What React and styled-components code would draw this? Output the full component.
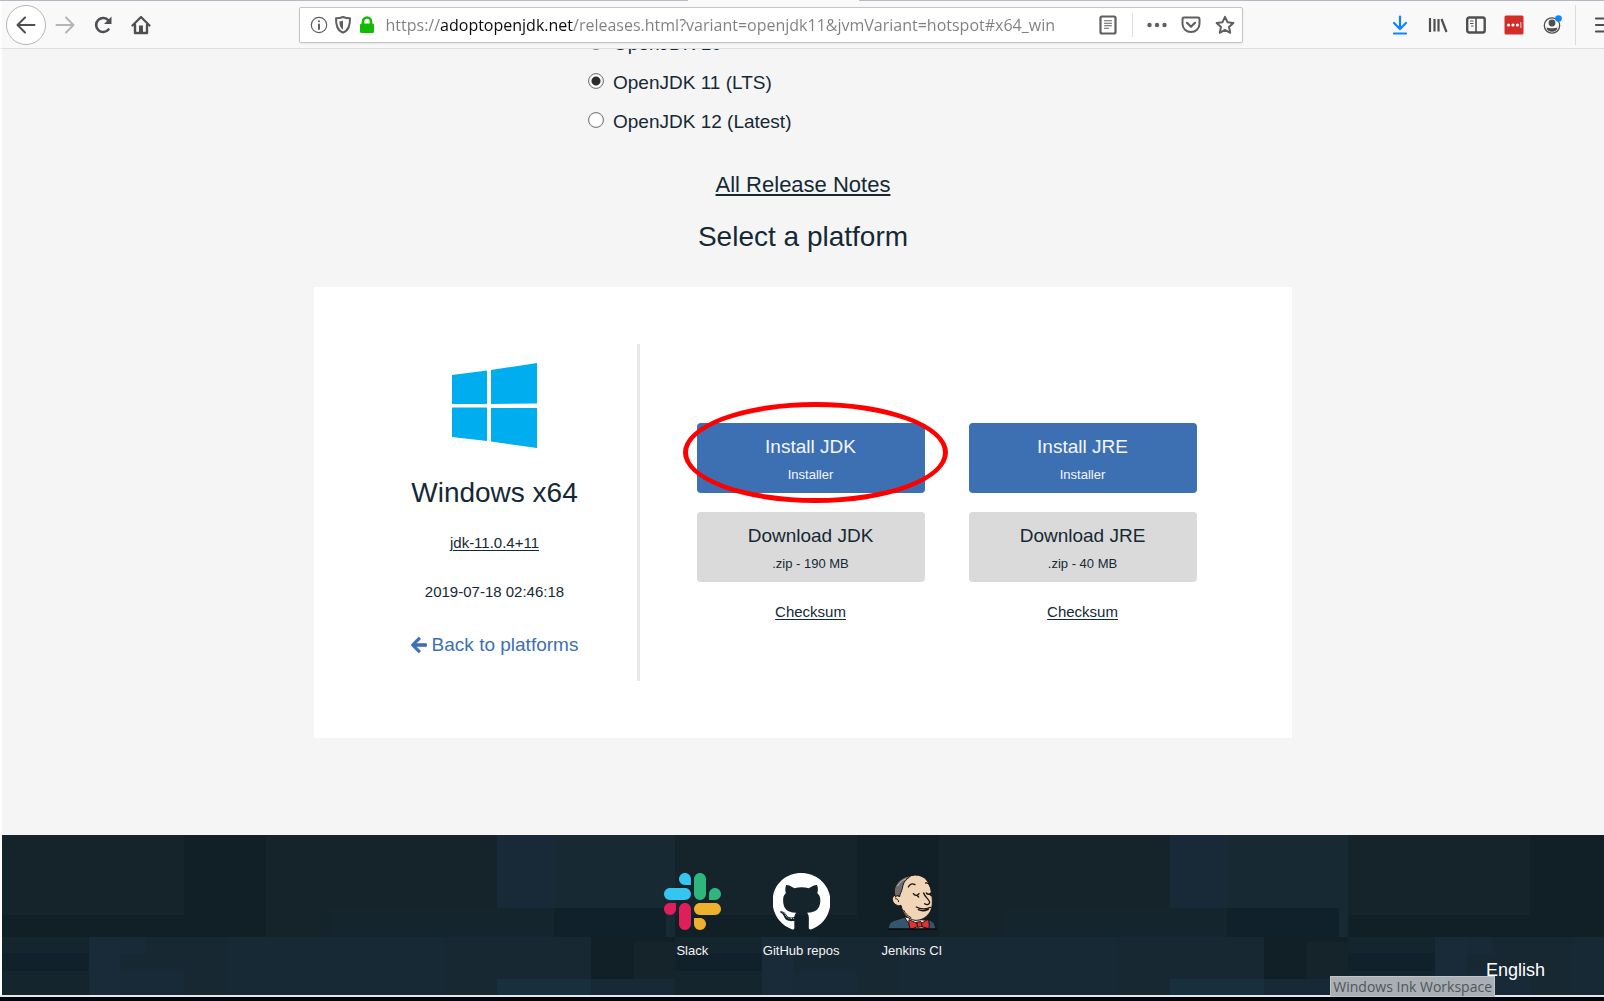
import React from "react";
import styled, { createGlobalStyle } from "styled-components";
import { FaGithub } from "react-icons/fa";

const sans = `"Liberation Sans", Arial, sans-serif`;
const chrome = `"Open Sans", "Noto Sans", sans-serif`;

const GlobalStyle = createGlobalStyle`
  *, *::before, *::after { box-sizing: border-box; }
  body { margin: 0; background: #03050e; }
  a { color: inherit; }
`;

/* ---------- window ---------- */

const Window = styled.div`
  display: flex;
  flex-direction: column;
  min-height: 100vh;
  overflow: hidden;
  color: #152935;
  font-family: ${sans};
`;

const TabEdge = styled.div`
  display: flex;
  height: 1px;
  background: #b9b7c1;
  justify-content: center;
`;

const ActiveTab = styled.div`
  width: 171px;
  margin-right: 57px;
  background: #f9f9fa;
`;

const Toolbar = styled.header`
  display: flex;
  align-items: center;
  justify-content: space-between;
  height: 48px;
  padding-left: 4px;
  border-left: 2px solid #fff;
  border-bottom: 1px solid #dfdfe0;
  background: #f9f9fa;
  overflow: hidden;
`;

const Group = styled.div`
  display: flex;
  align-items: center;
  gap: ${(p) => p.$gap}px;
`;

const IconButton = styled.button`
  display: flex;
  flex: none;
  align-items: center;
  justify-content: center;
  width: 20px;
  height: 20px;
  padding: 0;
  border: 0;
  background: none;
  color: ${(p) => p.$color || "#4f4f51"};
`;

const BackButton = styled(IconButton)`
  width: 40px;
  height: 40px;
  border: 1px solid #b5b5b5;
  border-radius: 50%;
  background: #fff;
`;

const Glyph = styled.svg`
  display: block;
  width: 20px;
  height: 20px;
  fill: none;
  stroke: currentColor;
  stroke-width: 2;
  stroke-linecap: round;
  stroke-linejoin: round;
`;

const AddressBar = styled.div`
  display: flex;
  align-items: center;
  flex: 0 1 944px;
  gap: 4px;
  height: 36px;
  padding: 0 7px 0 9px;
  border: 1px solid #c5c5c6;
  border-radius: 2px;
  background: #fff;
  box-shadow: 0 1px 2px rgba(0, 0, 0, 0.08);
`;

const AddressInput = styled.input`
  flex: 1;
  min-width: 0;
  height: 28px;
  margin-left: 5px;
  padding: 0;
  border: 0;
  outline: 0;
  font: 16px/28px ${chrome};
  color: transparent;
  background: linear-gradient(
    to right,
    #7f7f7f 54px,
    #0c0c0d 54px,
    #0c0c0d 187px,
    #7f7f7f 187px
  );
  -webkit-background-clip: text;
  background-clip: text;
`;

const Rule = styled.span`
  width: 1px;
  height: ${(p) => p.$height}px;
  background: #dcdcdd;
`;

const ToolbarEnd = styled(Group)`
  margin-right: -10px;
`;

/* ---------- page ---------- */

const Page = styled.main`
  flex: 1;
  display: flex;
  flex-direction: column;
  align-items: center;
  border-left: 2px solid #fff;
  background: #f5f5f5;
  overflow: hidden;
  padding-bottom: 97px;
`;

const VersionList = styled.fieldset`
  width: 430px;
  margin: -25px 0 0;
  padding: 0;
  border: 0;
`;

const VersionRow = styled.label`
  display: flex;
  align-items: center;
  gap: 9px;
  height: 39px;
  font-size: 19px;
  line-height: 22px;
`;

const Radio = styled.input`
  appearance: none;
  width: 16px;
  height: 16px;
  margin: 0 0 3px;
  border: 1px solid #7c7c7c;
  border-radius: 50%;
  background: #fff;
  box-shadow: inset 0 0 1px #777;

  &:checked {
    background: radial-gradient(circle, #2b2b2b 4px, #fff 5px);
  }
`;

const ReleaseNotes = styled.a`
  margin-top: 31px;
  font-size: 22px;
  line-height: 26px;
  text-underline-offset: 2px;
`;

const Title = styled.h2`
  margin: 23px 0 0;
  font-size: 28px;
  line-height: 32px;
  font-weight: 400;
`;

const Card = styled.section`
  display: flex;
  width: 978px;
  max-width: 100%;
  margin-top: 34px;
  padding: 57px 35px;
  background: #fff;
`;

const Platform = styled.div`
  display: flex;
  flex: 0 0 291px;
  flex-direction: column;
  align-items: center;
  padding: 19px 0 25px 3px;
  border-right: 3px solid #e6e8ea;
`;

const PlatformLogo = styled.svg`
  width: 85px;
  height: 85px;
  fill: #00adef;
`;

const PlatformName = styled.h3`
  margin: 29px 0 25px;
  font-size: 28px;
  line-height: 32px;
  font-weight: 400;
`;

const SmallLink = styled.a`
  font-size: 15px;
  line-height: 18px;
  text-underline-offset: 2px;
`;

const Released = styled.time`
  margin: 31px 0 33px;
  font-size: 15px;
  line-height: 18px;
`;

const BackLink = styled.a`
  display: flex;
  align-items: center;
  gap: 5px;
  color: #3d70b2;
  font-size: 19px;
  line-height: 22px;
  text-decoration: none;
`;

const BackArrow = styled.svg`
  width: 16px;
  height: 18px;
  fill: currentColor;
`;

const Downloads = styled.div`
  display: flex;
  flex: 1;
  justify-content: center;
  gap: 44px;
  padding: 79px 4px 0 0;
`;

const DownloadColumn = styled.div`
  position: relative;
  display: flex;
  flex-direction: column;
  align-items: center;
  width: 228px;
`;

const DownloadButton = styled.button`
  display: flex;
  flex-direction: column;
  align-items: center;
  gap: 9px;
  width: 100%;
  margin-bottom: 19px;
  padding: 13px 8px 10px;
  border: 0;
  border-radius: 4px;
  background: ${(p) => (p.$primary ? "#3d70b2" : "#dadada")};
  color: ${(p) => (p.$primary ? "#f4f6fa" : "#152935")};
  font-family: inherit;
`;

const ButtonTitle = styled.span`
  font-size: 19px;
  line-height: 22px;
`;

const ButtonNote = styled.span`
  font-size: 13px;
  line-height: 16px;
`;

const ChecksumLink = styled(SmallLink)`
  margin-top: 2px;
`;

const Highlight = styled.span`
  position: absolute;
  top: -21px;
  left: -14px;
  width: 265px;
  height: 101px;
  border: 5px solid #fe0000;
  border-radius: 50%;
  pointer-events: none;
`;

/* ---------- footer ---------- */

const Footer = styled.footer`
  position: relative;
  padding: 38px 59px 15px;
  border-left: 2px solid #fff;
  background: #15232b;
  color: #f4f4f4;
`;

const Mosaic = styled.svg`
  position: absolute;
  inset: 0;
  width: 100%;
  height: 100%;
`;

const Community = styled.nav`
  position: relative;
  display: flex;
  justify-content: center;
  gap: 42px;
`;

const CommunityLink = styled.a`
  display: flex;
  flex-direction: column;
  align-items: center;
  gap: 13px;
  font-size: 13px;
  line-height: 16px;
  text-decoration: none;

  svg {
    width: 57px;
    height: 57px;
  }
`;

const Language = styled.div`
  position: relative;
  display: flex;
  justify-content: flex-end;
  margin-top: 1px;
  font-size: 18px;
  line-height: 20px;
  color: #fff;
`;

const Taskbar = styled.div`
  position: relative;
  height: 6px;
  border-top: 2px solid #e4e7e8;
  background: #03050e;
`;

const Tooltip = styled.div`
  position: absolute;
  right: 109px;
  bottom: 4px;
  padding: 0 2px;
  border: 1px solid #c0c4c8;
  background: #a9afb4;
  color: #505559;
  font: 14px/19px ${chrome};
  white-space: nowrap;
`;

/* [x, y, width, height, colour] of each block in one 673px tile */
const blocks = [
  [0, 0, 182, 80, "#15232b"],
  [0, 80, 182, 22, "#111f26"],
  [182, 0, 82, 102, "#111f27"],
  [264, 0, 231, 102, "#15232b"],
  [328, 73, 224, 29, "#14252e"],
  [495, 0, 57, 73, "#182937"],
  [552, 0, 121, 102, "#172933"],
  [552, 73, 112, 29, "#11212b"],
  [0, 102, 87, 58, "#14252e"],
  [0, 118, 87, 18, "#11212b"],
  [87, 102, 31, 58, "#192b38"],
  [118, 102, 107, 58, "#172833"],
  [118, 102, 26, 17, "#182937"],
  [118, 136, 64, 24, "#182937"],
  [225, 102, 216, 58, "#182936"],
  [441, 102, 148, 58, "#172833"],
  [589, 102, 84, 58, "#111f27"],
  [632, 107, 41, 53, "#15232b"],
  [495, 144, 94, 16, "#182f3e"],
  [589, 144, 84, 16, "#172935"],
];

function FooterMosaic() {
  return (
    <Mosaic aria-hidden="true" shapeRendering="crispEdges">
      <defs>
        <pattern id="mosaic" width="673" height="160" patternUnits="userSpaceOnUse">
          {blocks.map(([x, y, w, h, fill], i) => (
            <rect key={i} x={x} y={y} width={w} height={h} fill={fill} />
          ))}
        </pattern>
      </defs>
      <rect width="100%" height="100%" fill="url(#mosaic)" />
    </Mosaic>
  );
}

function SlackLogo() {
  return (
    <svg viewBox="0 0 122.8 122.8" aria-hidden="true">
      <path fill="#e01e5a" d="M25.8 77.6c0 7.1-5.8 12.9-12.9 12.9S0 84.7 0 77.6s5.8-12.9 12.9-12.9h12.9v12.9zm6.5 0c0-7.1 5.8-12.9 12.9-12.9s12.9 5.8 12.9 12.9v32.3c0 7.1-5.8 12.9-12.9 12.9s-12.9-5.8-12.9-12.9V77.6z" />
      <path fill="#36c5f0" d="M45.2 25.8c-7.1 0-12.9-5.8-12.9-12.9S38.1 0 45.2 0s12.9 5.8 12.9 12.9v12.9H45.2zm0 6.5c7.1 0 12.9 5.8 12.9 12.9s-5.8 12.9-12.9 12.9H12.9C5.8 58.1 0 52.3 0 45.2s5.8-12.9 12.9-12.9h32.3z" />
      <path fill="#2eb67d" d="M97 45.2c0-7.1 5.8-12.9 12.9-12.9s12.9 5.8 12.9 12.9-5.8 12.9-12.9 12.9H97V45.2zm-6.5 0c0 7.1-5.8 12.9-12.9 12.9s-12.9-5.8-12.9-12.9V12.9C64.7 5.8 70.5 0 77.6 0s12.9 5.8 12.9 12.9v32.3z" />
      <path fill="#ecb22e" d="M77.6 97c7.1 0 12.9 5.8 12.9 12.9s-5.8 12.9-12.9 12.9-12.9-5.8-12.9-12.9V97h12.9zm0-6.5c-7.1 0-12.9-5.8-12.9-12.9s5.8-12.9 12.9-12.9h32.3c7.1 0 12.9 5.8 12.9 12.9s-5.8 12.9-12.9 12.9H77.6z" />
    </svg>
  );
}

function JenkinsLogo() {
  return (
    <svg viewBox="12 24 171 171" aria-hidden="true">
      <g stroke="#1a1310" strokeWidth="3" strokeLinejoin="round" strokeLinecap="round">
        <path fill="#33566e" d="M27 192c2-16 8-23 20-26l28-9 70 6c14 4 23 9 26 29z" />
        <path fill="#f4f4f4" d="M76 156l24 36h34l14-26-30-2z" />
        <path fill="#f0d6b7" d="M60 92C62 60 74 32 108 30c32 0 46 24 49 52 4 22 5 38-2 56-9 17-26 29-47 28-22-4-36-18-42-45-8 4-24-3-26-17 0-12 10-17 18-11z" />
        <path fill="#6d6d70" d="M50 95c-7-11-5-27 3-38 9-14 24-23 42-25l-10 10c-9 5-13 16-15 28-2 11-7 14-8 25-4-4-8-4-12 0z" />
        <path fill="none" stroke="#b9b9bb" strokeWidth="3" d="M56 62c6-10 14-16 24-20" />
        <path fill="none" d="M50 101c5 0 8 3 9 9" />
        <path fill="none" strokeWidth="4" d="M88 66c4-9 12-12 20-7M140 54c6-2 11 2 13 9" />
        <path fill="none" strokeWidth="4" d="M103 86c4 6 13 7 17 0M115 92l4 4M142 84c4 5 10 5 14 0M154 89l3 3" />
        <path fill="none" strokeWidth="4" d="M134 84c3 12 17 19 18 28 0 7-9 9-15 4M112 126c12 7 28 7 42 1M118 134c10 5 20 4 30-1" />
        <path fill="none" strokeWidth="3" d="M74 136c4 8 12 17 22 22" />
        <path fill="#e2322f" d="M116 176l-26-12c-1 10 0 21 5 29l24-9zM126 176l20-13c6 9 6 20 3 28l-22-6z" />
        <path fill="#e2322f" d="M114 171l12-1 4 15-13 2z" />
      </g>
      <path d="M27 190h146v4H27z" fill="#0d0d0d" />
    </svg>
  );
}

const versions = [
  { label: "OpenJDK 10" },
  { label: "OpenJDK 11 (LTS)", checked: true },
  { label: "OpenJDK 12 (Latest)" },
];

const packages = [
  { name: "JDK", size: "190 MB", highlighted: true },
  { name: "JRE", size: "40 MB" },
];

function BrowserToolbar() {
  return (
    <Toolbar>
      <Group $gap={9}>
        <BackButton aria-label="Back">
          <Glyph viewBox="0 0 20 20"><path d="M18.5 10H2M9 2.500L1.500 10 9 17.500" /></Glyph>
        </BackButton>
        <Group $gap={18}>
          <IconButton aria-label="Forward" $color="#b5b5b7">
            <Glyph viewBox="0 0 20 20"><path d="M1.500 10H18M11 2.500L18.500 10 11 17.500" /></Glyph>
          </IconButton>
          <IconButton aria-label="Reload">
            <Glyph viewBox="0 0 20 20">
              <path d="M15.500 14.500A7 7 0 1 1 15.500 5.500" strokeWidth="2.600" />
              <path d="M18.500 1.500V9H11z" fill="currentColor" stroke="none" />
            </Glyph>
          </IconButton>
          <IconButton aria-label="Home">
            <Glyph viewBox="0 0 20 20">
              <path d="M1.500 10.500L10 2l8.500 8.500" strokeWidth="2.200" />
              <path d="M4 10v8h12v-8" strokeWidth="2.400" />
              <path d="M8 10.500h4V18H8z" fill="currentColor" stroke="none" />
            </Glyph>
          </IconButton>
        </Group>
      </Group>

      <AddressBar>
        <IconButton aria-label="Site information" $color="#5f5f60">
          <Glyph viewBox="0 0 20 20">
            <circle cx="10" cy="10" r="7.700" strokeWidth="1.200" />
            <path d="M10 9.500V14M10 6.200v.1" />
          </Glyph>
        </IconButton>
        <IconButton aria-label="Tracking protection" $color="#5f5f60">
          <Glyph viewBox="0 0 20 20">
            <path d="M10 2C7.500 3 5 3.300 3 3.300c0 6.700 1 11.700 7 14.400 6-2.700 7-7.700 7-14.400-2 0-4.500-.3-7-1.300z" />
            <path d="M10 5.500c-1.300.6-2.500.8-3.700.9.200 3.800 1 6.600 3.700 8.300z" fill="currentColor" stroke="none" />
          </Glyph>
        </IconButton>
        <IconButton aria-label="Secure connection" $color="#12bc00">
          <Glyph viewBox="0 0 20 20">
            <rect x="3" y="8.500" width="14" height="9.500" rx="1.500" fill="currentColor" stroke="none" />
            <path d="M6 10V6.500a4 4 0 0 1 8 0V10" strokeWidth="2.600" />
          </Glyph>
        </IconButton>
        <AddressInput
          aria-label="Address"
          defaultValue="https://adoptopenjdk.net/releases.html?variant=openjdk11&jvmVariant=hotspot#x64_win"
        />
        <Group $gap={14}>
          <IconButton aria-label="Reader view" $color="#5f5f60">
            <Glyph viewBox="0 0 20 20">
              <rect x="2.500" y="1.500" width="15" height="17" rx="1.500" strokeWidth="2.200" />
              <path d="M6.500 5.700h7M6.500 8.200h7M6.500 10.700h7M6.500 13.200h4" strokeWidth="1.100" />
            </Glyph>
          </IconButton>
          <Rule $height={24} />
          <IconButton aria-label="Page actions" $color="#5f5f60">
            <Glyph viewBox="0 0 20 20">
              <g fill="currentColor" stroke="none">
                <circle cx="2.500" cy="10" r="2.200" />
                <circle cx="10" cy="10" r="2.200" />
                <circle cx="17.500" cy="10" r="2.200" />
              </g>
            </Glyph>
          </IconButton>
          <IconButton aria-label="Save to Pocket" $color="#5f5f60">
            <Glyph viewBox="0 0 20 20">
              <path d="M3 2.500h14c.8 0 1.500.6 1.500 1.400V9a8.500 8 0 0 1-17 0V3.900c0-.8.7-1.400 1.500-1.400z" />
              <path d="M6 7.800l4 4 4-4" strokeWidth="2.200" />
            </Glyph>
          </IconButton>
          <IconButton aria-label="Bookmark this page" $color="#5f5f60">
            <Glyph viewBox="0 0 20 20">
              <path d="M10 1.800l2.500 5.400 5.900.7-4.400 4 1.200 5.900L10 14.900l-5.200 2.900L6 11.900l-4.400-4 5.900-.7z" />
            </Glyph>
          </IconButton>
        </Group>
      </AddressBar>

      <ToolbarEnd $gap={13}>
        <Group $gap={18}>
          <IconButton aria-label="Downloads" $color="#0a84ff">
            <Glyph viewBox="0 0 20 20"><path d="M10 1.500v11M4 8l6 6 6-6M4 18.500h12" strokeWidth="2.200" /></Glyph>
          </IconButton>
          <IconButton aria-label="Library">
            <Glyph viewBox="0 0 20 20"><path d="M2 3v14M6.500 4v12.500M10.500 4v12.500M13.500 4l5 13" strokeWidth="2.200" strokeLinecap="butt" /></Glyph>
          </IconButton>
          <IconButton aria-label="Sidebars">
            <Glyph viewBox="0 0 20 20">
              <rect x="1.200" y="2.500" width="17.500" height="15" rx="2" strokeWidth="2.400" />
              <path d="M10 3v14" strokeWidth="1.600" />
              <path d="M4.500 6H7M4.500 8.500H7M5.500 11H7" strokeWidth="1.200" />
            </Glyph>
          </IconButton>
          <IconButton aria-label="Password manager" $color="#d32d27">
            <Glyph viewBox="0 0 20 20">
              <rect x="0.500" y="0.500" width="19" height="19" rx="1.500" fill="currentColor" stroke="none" />
              <g fill="#fff" stroke="none">
                <circle cx="4.500" cy="10" r="1.600" />
                <circle cx="9" cy="10" r="1.600" />
                <circle cx="13.500" cy="10" r="1.600" />
                <path d="M16.500 7h.8v6h-.8z" />
              </g>
            </Glyph>
          </IconButton>
          <IconButton aria-label="Account">
            <Glyph viewBox="0 0 20 20">
              <circle cx="10" cy="10.500" r="7.700" strokeWidth="1.300" />
              <circle cx="10" cy="8" r="3.400" fill="currentColor" stroke="none" />
              <path d="M4.500 12.500c2 1 9 1 11 0-.5 3-2.500 4.300-5.500 4.300s-5-1.300-5.500-4.300z" fill="currentColor" stroke="none" />
              <circle cx="16.500" cy="3.500" r="3.300" fill="#0a84ff" stroke="none" />
            </Glyph>
          </IconButton>
        </Group>
        <Group $gap={18}>
          <Rule $height={40} />
          <IconButton aria-label="Menu">
            <Glyph viewBox="0 0 20 20"><path d="M2 3.500h16M2 10h16M2 16.500h16" strokeWidth="2.200" /></Glyph>
          </IconButton>
        </Group>
      </ToolbarEnd>
    </Toolbar>
  );
}

export default function App() {
  return (
    <Window>
      <GlobalStyle />
      <TabEdge><ActiveTab /></TabEdge>
      <BrowserToolbar />

      <Page>
        <VersionList aria-label="Version">
          {versions.map((v) => (
            <VersionRow key={v.label}>
              <Radio type="radio" name="version" defaultChecked={v.checked} />
              {v.label}
            </VersionRow>
          ))}
        </VersionList>
        <ReleaseNotes href="#notes">All Release Notes</ReleaseNotes>
        <Title>Select a platform</Title>

        <Card>
          <Platform>
            <PlatformLogo viewBox="0 0 85 85" aria-hidden="true">
              <path d="M0 12l35-4.500V41H0zM39 7l46-7v40.500L39 41zM0 44.500h35V78L0 74zM39 45h46v40l-46-6.500z" />
            </PlatformLogo>
            <PlatformName>Windows x64</PlatformName>
            <SmallLink href="#release">jdk-11.0.4+11</SmallLink>
            <Released>2019-07-18 02:46:18</Released>
            <BackLink href="#platforms">
              <BackArrow viewBox="0 0 448 512" aria-hidden="true">
                <path d="M257.500 445.100l-22.200 22.200c-9.400 9.400-24.600 9.400-33.900 0L7 273c-9.400-9.400-9.400-24.600 0-33.900L201.400 44.700c9.400-9.400 24.600-9.400 33.900 0l22.200 22.200c9.500 9.500 9.300 25-.4 34.300L136.600 216H424c13.300 0 24 10.700 24 24v32c0 13.300-10.700 24-24 24H136.600l120.500 114.800c9.800 9.300 10 24.800.4 34.300z" stroke="currentColor" strokeWidth="20" />
              </BackArrow>
              Back to platforms
            </BackLink>
          </Platform>
          <Downloads>
            {packages.map((p) => (
              <DownloadColumn key={p.name}>
                <DownloadButton $primary>
                  <ButtonTitle>Install {p.name}</ButtonTitle>
                  <ButtonNote>Installer</ButtonNote>
                </DownloadButton>
                <DownloadButton>
                  <ButtonTitle>Download {p.name}</ButtonTitle>
                  <ButtonNote>.zip - {p.size}</ButtonNote>
                </DownloadButton>
                <ChecksumLink href="#checksum">Checksum</ChecksumLink>
                {p.highlighted && <Highlight />}
              </DownloadColumn>
            ))}
          </Downloads>
        </Card>
      </Page>

      <Footer>
        <FooterMosaic />
        <Community aria-label="Community">
          <CommunityLink href="#slack"><SlackLogo />Slack</CommunityLink>
          <CommunityLink href="#github"><FaGithub viewBox="4 8 488 488" color="#fff" aria-hidden="true" />GitHub repos</CommunityLink>
          <CommunityLink href="#jenkins"><JenkinsLogo />Jenkins CI</CommunityLink>
        </Community>
        <Language>English</Language>
      </Footer>
      <Taskbar>
        <Tooltip role="tooltip">Windows Ink Workspace</Tooltip>
      </Taskbar>
    </Window>
  );
}
